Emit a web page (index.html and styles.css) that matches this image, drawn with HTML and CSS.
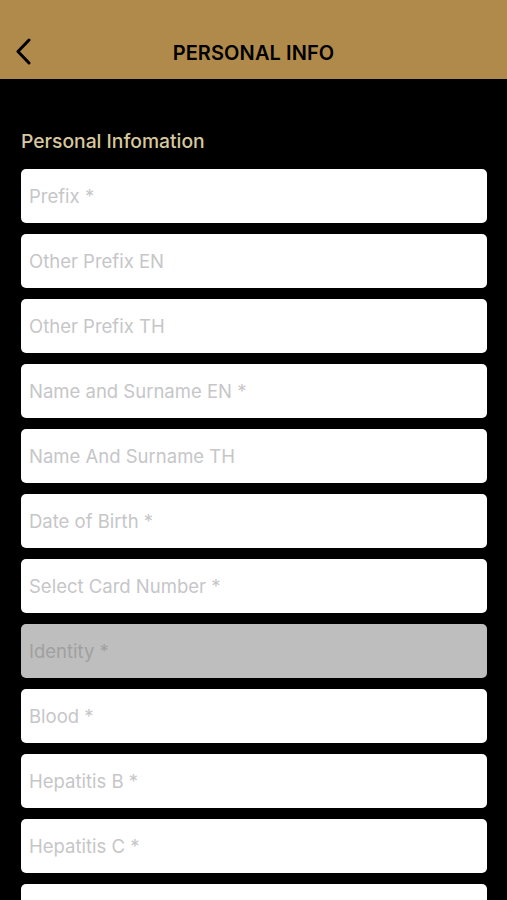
FILE: index.html
```html
<!DOCTYPE html>
<html>
<head>
<meta charset="utf-8">
<link rel="stylesheet" href="styles.css">
</head>
<body>
<header class="topbar">
  <button class="back" aria-label="Back">
    <svg width="16" height="27" viewBox="0 0 16 27"><path d="M14 2 L3 13.5 L14 25" fill="none" stroke="#000" stroke-width="3" stroke-linecap="round" stroke-linejoin="round"/></svg>
  </button>
  <h1 class="title">PERSONAL INFO</h1>
</header>
<main class="content">
  <h2 class="section-label">Personal Infomation</h2>
  <div class="fields">
    <div class="field">Prefix *</div>
    <div class="field">Other Prefix EN</div>
    <div class="field">Other Prefix TH</div>
    <div class="field">Name and Surname EN *</div>
    <div class="field">Name And Surname TH</div>
    <div class="field">Date of Birth *</div>
    <div class="field">Select Card Number *</div>
    <div class="field disabled">Identity *</div>
    <div class="field">Blood *</div>
    <div class="field">Hepatitis B *</div>
    <div class="field">Hepatitis C *</div>
    <div class="field">&nbsp;</div>
  </div>
</main>
</body>
</html>
```
FILE: styles.css
```css
html, body {
  margin: 0;
  padding: 0;
  background: #000;
  height: 900px;
  overflow: hidden;
  font-family: Inter, "Open Sans", "Liberation Sans", sans-serif;
}
.topbar {
  height: 79px;
  background: #B08A4B;
  position: relative;
  display: flex;
  align-items: center;
  justify-content: center;
  box-sizing: border-box;
  padding-top: 26px;
}
.back {
  position: absolute;
  left: 15px;
  top: 38px;
  padding: 0;
  border: 0;
  background: none;
  width: 16px;
  height: 27px;
}
.back svg { display: block; }
.title {
  margin: 0;
  font-size: 20px;
  font-weight: 600;
  color: #000;
  letter-spacing: 0.1px;
}
.content {
  padding: 0 20px 0 21px;
}
.section-label {
  margin: 0;
  padding-top: 50px;
  font-size: 19.3px;
  line-height: 24px;
  font-weight: 500;
  color: #D8C89E;
  height: 40px;
}
.fields {
  display: flex;
  flex-direction: column;
  gap: 11px;
}
.field {
  height: 54px;
  box-sizing: border-box;
  background: #fff;
  border-radius: 5px;
  padding: 0 8px;
  display: flex;
  align-items: center;
  font-size: 18.5px;
  color: #C6C6C8;
  flex-shrink: 0;
}
.field.disabled {
  background: #BEBEBE;
  color: #A0A0A0;
}
```
